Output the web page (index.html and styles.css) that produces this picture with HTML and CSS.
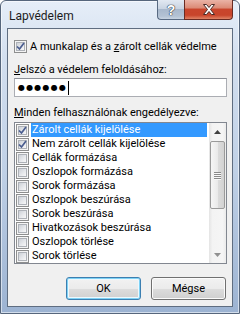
FILE: index.html
```html
<!DOCTYPE html>
<html lang="hu">
<head>
<meta charset="utf-8">
<title>Lapvédelem</title>
<link rel="stylesheet" href="styles.css">
</head>
<body>
<div class="window">
  <div class="titlebar">
    <span class="title">Lapvédelem</span>
    <div class="caption">
      <div class="cbtn help"><span class="q">?</span></div>
      <div class="cbtn close">
        <svg width="14" height="11" viewBox="0 0 14 11"><path d="M1.5 0.5h3l2.5 3 2.5-3h3l-4 5 4 5h-3l-2.5-3-2.5 3h-3l4-5z" fill="#fff" stroke="#4a2a26" stroke-width="1" stroke-linejoin="round"/></svg>
      </div>
    </div>
  </div>
  <div class="client">
    <div class="chk-main"><span class="cb"><span class="cb-in"><svg class="tick" width="9" height="9" viewBox="0 0 9 9"><path d="M1 4.5L3.5 7L8 1" fill="none" stroke="#4a5d8f" stroke-width="1.7"/></svg></span></span><span>A munkalap és a <u>z</u>árolt cellák védelme</span></div>
    <div class="label l1"><u>J</u>elszó a védelem feloldásához:</div>
    <div class="textbox"><span class="dots">●●●●●●</span><span class="caret"></span></div>
    <div class="label l2"><u>M</u>inden felhasználónak engedélyezve:</div>
    <div class="listbox">
      <div class="items">
        <div class="row"><span class="cb"><span class="cb-in"><svg class="tick" width="9" height="9" viewBox="0 0 9 9"><path d="M1 4.5L3.5 7L8 1" fill="none" stroke="#4a5d8f" stroke-width="1.7"/></svg></span></span><span class="txt sel">Zárolt cellák kijelölése</span></div>
        <div class="row"><span class="cb"><span class="cb-in"><svg class="tick" width="9" height="9" viewBox="0 0 9 9"><path d="M1 4.5L3.5 7L8 1" fill="none" stroke="#4a5d8f" stroke-width="1.7"/></svg></span></span><span class="txt">Nem zárolt cellák kijelölése</span></div>
        <div class="row"><span class="cb"><span class="cb-in"></span></span><span class="txt">Cellák formázása</span></div>
        <div class="row"><span class="cb"><span class="cb-in"></span></span><span class="txt">Oszlopok formázása</span></div>
        <div class="row"><span class="cb"><span class="cb-in"></span></span><span class="txt">Sorok formázása</span></div>
        <div class="row"><span class="cb"><span class="cb-in"></span></span><span class="txt">Oszlopok beszúrása</span></div>
        <div class="row"><span class="cb"><span class="cb-in"></span></span><span class="txt">Sorok beszúrása</span></div>
        <div class="row"><span class="cb"><span class="cb-in"></span></span><span class="txt">Hivatkozások beszúrása</span></div>
        <div class="row"><span class="cb"><span class="cb-in"></span></span><span class="txt">Oszlopok törlése</span></div>
        <div class="row"><span class="cb"><span class="cb-in"></span></span><span class="txt">Sorok törlése</span></div>
      </div>
      <div class="scrollbar">
        <div class="sb-btn"><svg width="7" height="4" viewBox="0 0 7 4"><path d="M3.5 0L7 4H0z" fill="#404040"/></svg></div>
        <div class="thumb"><span class="grip"></span><span class="grip"></span><span class="grip"></span><span class="grip"></span></div>
        <div class="track"></div>
        <div class="sb-btn"><svg width="7" height="4" viewBox="0 0 7 4"><path d="M0 0H7L3.5 4z" fill="#909090"/></svg></div>
      </div>
    </div>
    <div class="buttons">
      <div class="btn default">OK</div>
      <div class="btn">Mégse</div>
    </div>
  </div>
</div>
</body>
</html>
```
FILE: styles.css
```css
* { box-sizing: border-box; }
html, body { margin: 0; padding: 0; }
body {
  width: 240px;
  height: 314px;
  overflow: hidden;
  background: #ffffff;
  font-family: Roboto, "Liberation Sans", sans-serif;
  font-size: 11px;
  color: #000;
}
.window {
  width: 240px;
  height: 314px;
  border: 1px solid #56667c;
  border-radius: 6px 6px 0 0;
  background: linear-gradient(to bottom, #e6eef8 0%, #d3dfef 18%, #bfd0e6 55%, #9cb3d2 100%);
  box-shadow: inset 0 0 0 1px rgba(255,255,255,0.55);
  padding: 0 6px 6px;
  display: flex;
  flex-direction: column;
}
.titlebar {
  height: 27px;
  display: flex;
  align-items: flex-start;
}
.title {
  padding: 8px 0 0 2px;
  font-size: 12px;
  line-height: 15px;
  color: #1c1c1c;
}
.caption {
  margin-left: auto;
  margin-top: -1px;
  display: flex;
}
.cbtn {
  height: 20px;
  border: 1px solid #586a82;
  border-top: none;
  display: flex;
  align-items: center;
  justify-content: center;
}
.help {
  width: 27px;
  border-right: none;
  border-radius: 0 0 0 4px;
  background: linear-gradient(#e2e9f2 0%, #c9d4e2 45%, #a8b8cc 50%, #b3c2d4 85%, #c8d4e2 100%);
}
.q {
  font-family: "Liberation Sans", sans-serif;
  font-weight: bold;
  font-size: 14px;
  line-height: 14px;
  color: #fff;
  text-shadow: 0 0 1px #2c3440, 0 0 1px #2c3440, 0 0 1px #2c3440;
}
.close {
  width: 49px;
  border-color: #6a2b22;
  border-radius: 0 0 4px 0;
  background: linear-gradient(#eab3a6 0%, #dc8c78 40%, #c9452c 50%, #c8452b 80%, #e08466 100%);
}
.client {
  flex: 1;
  background: #f0f0f0;
  border: 1px solid #5f6d80;
  padding: 0 5px 0 6px;
  display: flex;
  flex-direction: column;
}
.cb {
  width: 13px;
  height: 13px;
  flex: none;
  border: 1px solid #8e8f8f;
  background: #f4f4f4;
  padding: 1px;
}
.cb-in {
  display: flex;
  align-items: center;
  justify-content: center;
  width: 9px;
  height: 9px;
  border: 1px solid #aeb2b8;
  background: linear-gradient(135deg, #cdd1d7 0%, #e6e8eb 55%, #f8f8f8 100%);
}
.tick { flex: none; }
.chk-main {
  margin-top: 11px;
  height: 13px;
  display: flex;
  align-items: center;
  gap: 3px;
  line-height: 13px;
  white-space: nowrap;
}
.label {
  line-height: 15px;
  white-space: nowrap;
}
.l1 { margin-top: 9px; }
.l2 { margin-top: 8px; }
.textbox {
  margin-top: 1px;
  width: 213px;
  height: 19px;
  border: 1px solid #abadb3;
  border-top-color: #8d9098;
  background: #fff;
  display: flex;
  align-items: center;
  padding-left: 3px;
}
.dots {
  font-family: "DejaVu Sans", sans-serif;
  font-size: 8px;
  letter-spacing: 1.2px;
  line-height: 10px;
}
.caret {
  width: 1px;
  height: 14px;
  background: #000;
  margin-left: 1px;
}
.listbox {
  margin-top: 2px;
  width: 213px;
  height: 142px;
  border: 1px solid #828790;
  background: #fff;
  display: flex;
}
.items {
  flex: 1;
  display: flex;
  flex-direction: column;
}
.row {
  height: 14px;
  display: flex;
  align-items: center;
  padding-left: 1px;
  white-space: nowrap;
}
.txt {
  flex: 1;
  margin-left: 2px;
  margin-right: 2px;
  padding-left: 1px;
  height: 14px;
  line-height: 14px;
}
.sel {
  background: #3399ff;
  color: #fff;
}
.scrollbar {
  width: 17px;
  display: flex;
  flex-direction: column;
  background: linear-gradient(to right, #e4e4e4 0%, #f3f3f3 20%, #f5f5f5 80%, #ebebeb 100%);
}
.sb-btn {
  height: 17px;
  display: flex;
  align-items: center;
  justify-content: center;
}
.thumb {
  height: 68px;
  margin: 1px 1px 0;
  border: 1px solid #9a9a9a;
  border-radius: 2px;
  background: linear-gradient(to right, #f6f6f6 0%, #eaeaea 50%, #dcdcdc 51%, #d2d2d2 100%);
  display: flex;
  flex-direction: column;
  align-items: center;
  justify-content: center;
  gap: 1px;
}
.grip {
  width: 7px;
  height: 1px;
  background: #8a8a8a;
  box-shadow: 0 1px 0 #f8f8f8;
}
.track { flex: 1; }
.buttons {
  margin-top: 13px;
  display: flex;
  justify-content: flex-end;
  gap: 10px;
  padding-right: 1px;
}
.btn {
  width: 75px;
  height: 23px;
  border: 1px solid #707070;
  border-radius: 3px;
  background: linear-gradient(#f2f2f2 0%, #ebebeb 50%, #dddddd 51%, #cfcfcf 100%);
  box-shadow: inset 0 0 0 1px #fbfbfb;
  display: flex;
  align-items: center;
  justify-content: center;
  line-height: 15px;
}
.default {
  border-color: #3c7fb1;
  box-shadow: inset 0 0 0 1px #7fd2f5, inset 0 0 0 2px #eef8fd;
}
```
